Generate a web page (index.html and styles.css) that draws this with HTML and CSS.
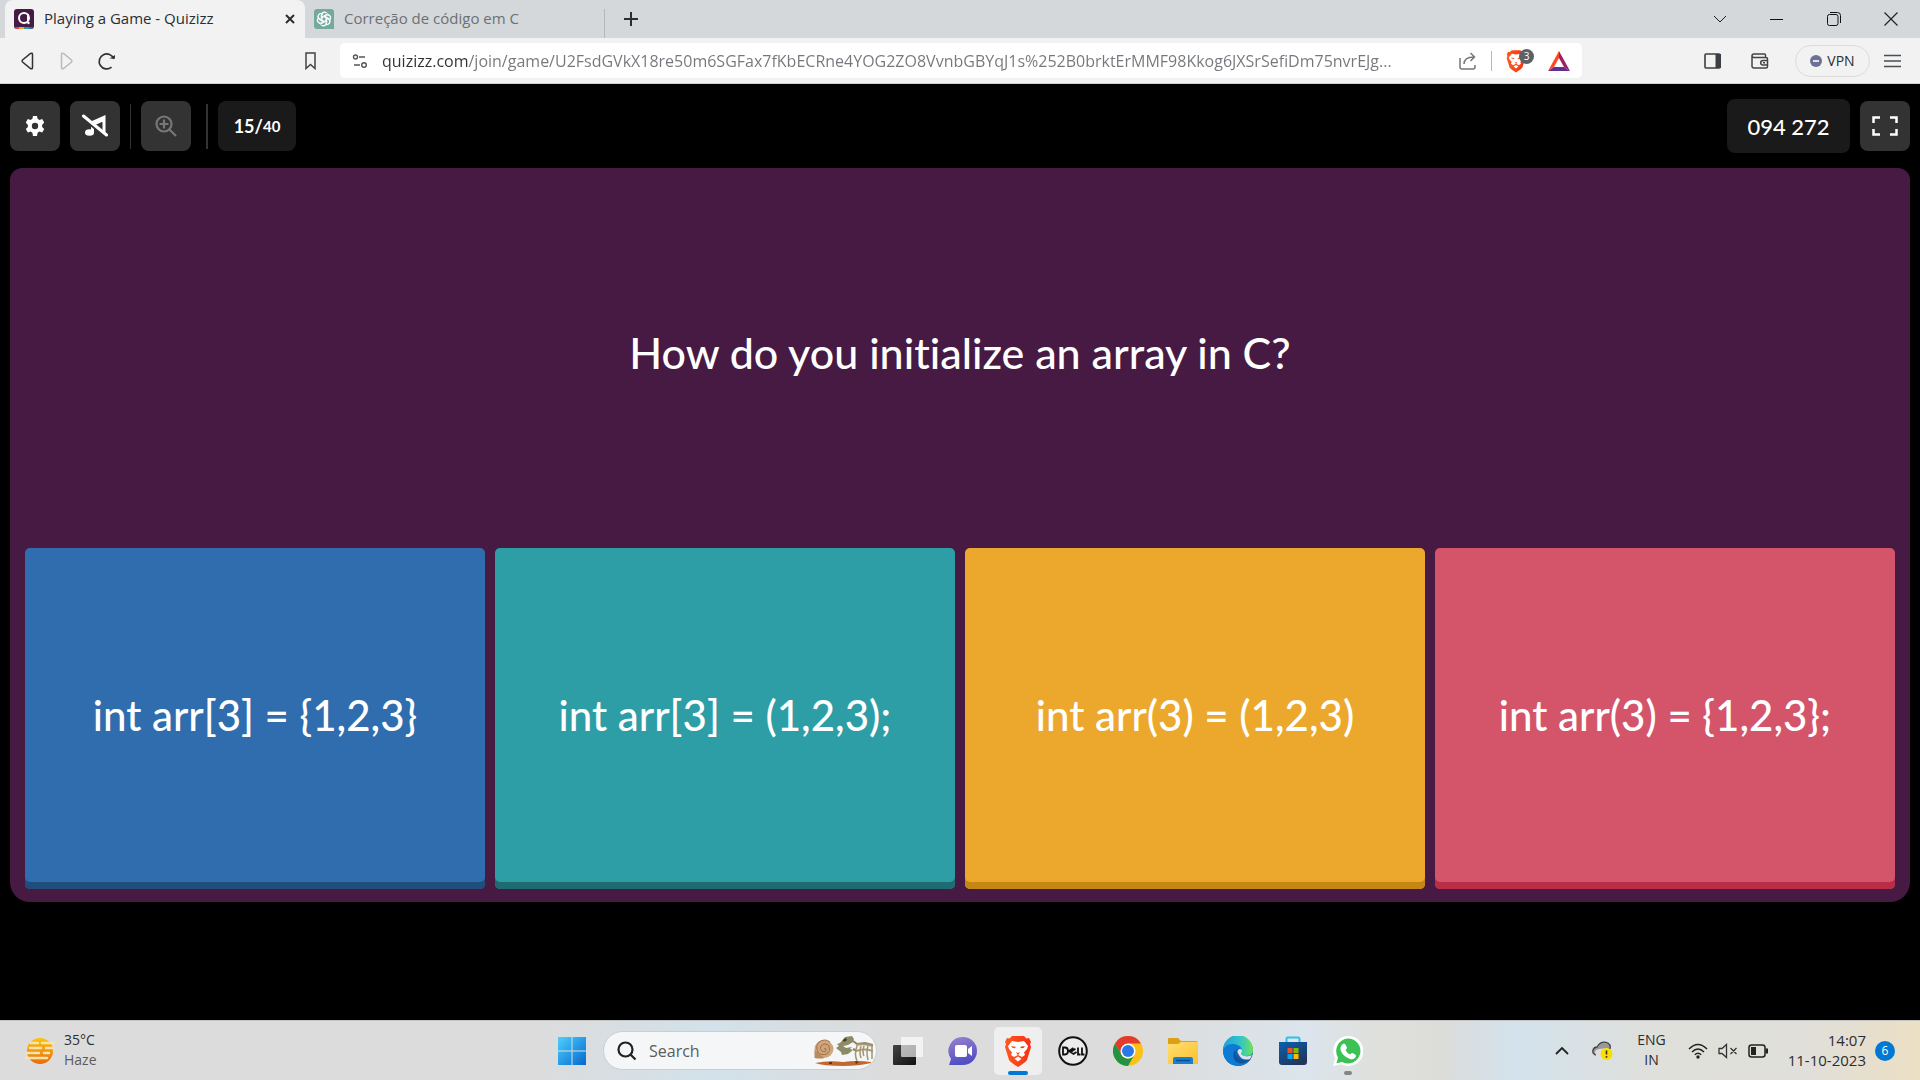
FILE: index.html
```html
<!DOCTYPE html>
<html lang="en">
<head>
<meta charset="utf-8">
<meta name="viewport" content="width=device-width, initial-scale=1">
<title>Playing a Game - Quizizz</title>
<link rel="stylesheet" href="styles.css">
</head>
<body>
<header class="browser">
  <div class="tabs">
    <div class="tab tab-active">
      <svg class="favicon" width="20" height="20" viewBox="0 0 20 20"><rect width="20" height="20" rx="3" fill="#461a42"/><path d="M1 18h4v2H3q-2 0-2-2z" fill="#e0455b"/><path d="M5 18h5v2H5z" fill="#eca82c"/><path d="M10 18h5v2h-5z" fill="#2d9da6"/><path d="M15 18h4q0 2-2 2h-2z" fill="#2f6dae"/><circle cx="10" cy="9" r="5" fill="none" stroke="#fff" stroke-width="2"/><path d="M14 5v7" stroke="#fff" stroke-width="2"/><circle cx="14.500" cy="14" r="1.200" fill="#fff"/></svg>
      <span class="tab-title">Playing a Game - Quizizz</span>
      <button class="icon-btn tab-close" aria-label="Close tab"><svg width="12" height="12" viewBox="0 0 12 12"><path d="M2 2l8 8M10 2l-8 8" stroke="#2b2d30" stroke-width="2"/></svg></button>
    </div>
    <div class="tab tab-idle">
      <svg class="favicon" width="20" height="20" viewBox="0 0 20 20"><path d="M3 0h14a3 3 0 013 3v17H3a3 3 0 01-3-3V3a3 3 0 013-3z" fill="#74aa9c"/><g fill="none" stroke="#fff" stroke-width="1"><path id="petal" d="M8 11.200V6.200a3 3 0 015.500-1.600M8 8l4-2.400a3 3 0 014.400 3"/><use href="#petal" transform="rotate(60 10 10)"/><use href="#petal" transform="rotate(120 10 10)"/><use href="#petal" transform="rotate(180 10 10)"/><use href="#petal" transform="rotate(240 10 10)"/><use href="#petal" transform="rotate(300 10 10)"/></g></svg>
      <span class="tab-title">Correção de código em C</span>
    </div>
    <button class="icon-btn new-tab" aria-label="New tab"><svg width="14" height="14" viewBox="0 0 14 14"><path d="M7 0v14M0 7h14" stroke="#2b2d30" stroke-width="2"/></svg></button>
    <div class="window-controls">
      <button class="icon-btn" aria-label="Search tabs"><svg width="14" height="14" viewBox="0 0 14 14"><path d="M1 4l6 6 6-6" fill="none" stroke="#222"/></svg></button>
      <button class="icon-btn" aria-label="Minimize"><svg width="14" height="14" viewBox="0 0 14 14"><path d="M0 7.500h13" stroke="#111"/></svg></button>
      <button class="icon-btn" aria-label="Restore"><svg width="14" height="14" viewBox="0 0 14 14"><rect x=".5" y="2.500" width="10.500" height="11" rx="2" fill="none" stroke="#111"/><path d="M3 .500h7.500a3 3 0 013 3V11" fill="none" stroke="#111"/></svg></button>
      <button class="icon-btn" aria-label="Close window"><svg width="14" height="14" viewBox="0 0 14 14"><path d="M.500 .500l13 13M13.500 .500l-13 13" stroke="#222" stroke-width="1.200"/></svg></button>
    </div>
  </div>
  <nav class="toolbar">
    <div class="history">
      <button class="icon-btn" aria-label="Back"><svg width="20" height="20" viewBox="0 0 20 20"><path d="M13.500 2.500q2-1 2 1v13q0 2-2 1L5.500 11q-1-1 0-2z" fill="none" stroke="#333" stroke-width="1.500"/></svg></button>
      <button class="icon-btn" aria-label="Forward" disabled><svg width="20" height="20" viewBox="0 0 20 20"><path d="M6.500 2.500q-2-1-2 1v13q0 2 2 1L14.500 11q1-1 0-2z" fill="none" stroke="#bbb" stroke-width="1.500"/></svg></button>
      <button class="icon-btn" aria-label="Reload"><svg width="20" height="20" viewBox="0 0 20 20"><path d="M14.500 16.200A7.500 7.500 0 1116.800 8" fill="none" stroke="#333" stroke-width="1.700"/><path d="M12.500 7.500h5.500V4z" fill="#333"/></svg></button>
    </div>
    <button class="icon-btn bookmark" aria-label="Bookmark"><svg width="14" height="18" viewBox="0 0 14 18"><path d="M2 1h9v15.500l-4.500-4-4.500 4z" fill="none" stroke="#444" stroke-width="1.500"/></svg></button>
    <div class="address">
      <button class="icon-btn" aria-label="Site settings"><svg width="16" height="16" viewBox="0 0 16 16" fill="none" stroke="#555" stroke-width="1.400"><circle cx="3.500" cy="4" r="2"/><path d="M7 4h6M2 12h6"/><circle cx="12" cy="12" r="2.300"/></svg></button>
      <input class="url" type="text" aria-label="Address" value="quizizz.com/join/game/U2FsdGVkX18re50m6SGFax7fKbECRne4YOG2ZO8VvnbGBYqJ1s%252B0brktErMMF98Kkog6JXSrSefiDm75nvrEJg...">
      <button class="icon-btn" aria-label="Share"><svg width="18" height="18" viewBox="0 0 18 18" fill="none" stroke="#777" stroke-width="1.500"><path d="M1 6v9q0 2 2 2h11q2 0 2-2v-2M5 12q0-7 10-7M11.500 1l4 4-4 4"/></svg></button>
      <span class="address-divider"></span>
      <button class="icon-btn shields" aria-label="Brave Shields, 3 blocked"><svg width="20" height="24" viewBox="0 0 28 32"><use href="#lion"/></svg><span class="badge">3</span></button>
      <button class="icon-btn" aria-label="Rewards"><svg width="22" height="20" viewBox="0 0 22 20"><path d="M11 0L0 20l6-4 5-9z" fill="#ff4724"/><path d="M11 0l11 20-6-4-5-9z" fill="#9e1f63"/><path d="M0 20h22l-6-4H6z" fill="#662d91"/></svg></button>
    </div>
    <div class="tools">
      <button class="icon-btn sidebar-btn" aria-label="Sidebar"><svg width="17" height="16" viewBox="0 0 17 16"><rect x="1" y="1" width="15" height="14" rx="1" fill="none" stroke="#3b3e43" stroke-width="1.600"/><path d="M11.500 1H17v14h-5.500z" fill="#3b3e43"/></svg></button>
      <button class="icon-btn" aria-label="Wallet"><svg width="18" height="16" viewBox="0 0 18 16" fill="none" stroke="#444" stroke-width="1.500"><path d="M1 3v10q0 2 2 2h12q1.500 0 1.500-1.500V6q0-1.500-1.500-1.500H3Q1 4.500 1 3q0-2 2-2h10.500q1 0 1 1v2.500M16.500 7.500H12a2.300 2.300 0 000 4.600h4.500M12 9.800h2"/></svg></button>
      <button class="vpn"><svg width="12" height="12" viewBox="0 0 12 12"><circle cx="6" cy="6" r="6" fill="#6b7094"/><path d="M3 6h6" stroke="#fff" stroke-width="1.600"/></svg>VPN</button>
      <button class="icon-btn" aria-label="Menu"><svg width="17" height="14" viewBox="0 0 17 14"><path d="M0 1.500h17M0 7h17M0 12.500h17" stroke="#4a4d52" stroke-width="1.500"/></svg></button>
    </div>
  </nav>
</header>

<main class="game">
  <div class="game-bar">
    <button class="game-btn" aria-label="Settings"><svg width="20" height="20" viewBox="0 0 20 20"><path d="M8 0h4l.6 2.800 1.900 1.100 2.700-.9 2 3.500L17.100 8.900v2.200l2.100 1.900-2 3.500-2.700-.9-1.900 1.100L12 20H8l-.6-3.300-1.900-1.100-2.700.9-2-3.500 2.100-1.900V8.900L.8 6.500l2-3.500 2.700.9 1.900-1.100z" fill="#fff"/><circle cx="10" cy="10" r="3.200" fill="#333"/></svg></button>
    <button class="game-btn" aria-label="Music off"><svg width="26" height="24" viewBox="0 0 26 24"><path d="M10 7l13.500-6v20h-3V8L11 12z" fill="#fff"/><path d="M9 10h3v8h-3z" fill="#fff"/><ellipse cx="7.500" cy="18.500" rx="4.500" ry="3.300" fill="#fff"/><path d="M14 11l6-3v8z" fill="#333"/><path d="M1 4l23 19" stroke="#333" stroke-width="3"/><path d="M1.500 2l23 19" stroke="#fff" stroke-width="3" stroke-linecap="round"/></svg></button>
    <span class="game-divider"></span>
    <button class="game-btn" aria-label="Zoom in" disabled><svg width="22" height="22" viewBox="0 0 22 22" fill="none" stroke="#777" stroke-width="2.200"><circle cx="9" cy="9" r="7.500"/><path d="M14.500 14.500L21 21M9 4.500v9M4.500 9h9"/></svg></button>
    <span class="game-divider game-divider-wide"></span>
    <div class="counter">15/<span class="counter-total">40</span></div>
    <div class="room-code">094 272</div>
    <button class="game-btn" aria-label="Full screen"><svg width="26" height="20" viewBox="0 0 26 20"><path d="M8 1.500H1.500V7M18 1.500h6.500V7M8 18.500H1.500V13M18 18.500h6.500V13" fill="none" stroke="#fff" stroke-width="2.500"/></svg></button>
  </div>
  <section class="stage">
    <h1 class="question">How do you initialize an array in C?</h1>
    <div class="answers">
      <button class="answer answer-blue">int arr[3] = {1,2,3}</button>
      <button class="answer answer-teal">int arr[3] = (1,2,3);</button>
      <button class="answer answer-yellow">int arr(3) = (1,2,3)</button>
      <button class="answer answer-red">int arr(3) = {1,2,3};</button>
    </div>
  </section>
</main>

<footer class="taskbar">
  <button class="weather">
    <svg width="30" height="28" viewBox="0 0 30 28"><defs><linearGradient id="sun" x2="0" y2="1"><stop stop-color="#f9c40c"/><stop offset="1" stop-color="#ee6a0c"/></linearGradient></defs><circle cx="15" cy="14" r="13" fill="url(#sun)"/><g stroke="#f5e3b0" stroke-width="2.600" stroke-linecap="round"><path d="M6 6h7M17 6h12M5 11h11M21 11h7M1 16h13M19 16h5M1 21h21"/></g></svg>
    <span class="weather-text"><span>35°C</span><span class="muted">Haze</span></span>
  </button>
  <div class="dock">
    <button class="app" aria-label="Start"><svg width="30" height="30" viewBox="0 0 30 30"><defs><linearGradient id="win" x2="1" y2="1"><stop stop-color="#4cd0fd"/><stop offset="1" stop-color="#0468cf"/></linearGradient></defs><path d="M1 1h13.500v13.500H1zM15.500 1H29v13.500H15.500zM1 15.500h13.500V29H1zM15.500 15.500H29V29H15.500z" fill="url(#win)"/></svg></button>
    <div class="search">
      <svg width="20" height="20" viewBox="0 0 20 20" fill="none" stroke="#222" stroke-width="2.200"><circle cx="8.500" cy="8.500" r="7"/><path d="M13.500 13.500L18.500 18.500"/></svg>
      <input class="search-input" type="search" placeholder="Search" aria-label="Search">
      <svg width="60" height="30" viewBox="0 0 60 30"><path d="M2 27q14-3 28-1 14-2 28 0v1q-12 3-28 3-20 0-28-3z" fill="#c4672f"/><path d="M16 26h3v2h-3zM42 25l4 1-3 2z" fill="#63301a"/><ellipse cx="11" cy="13" rx="9.500" ry="9" fill="#cfa67c"/><path d="M1.500 14v8q6 1 10 0z" fill="#b98a60"/><path d="M11 13q2-2 2 1t-4 1q-3-2-1-5 4-4 8 0 2 5-2 8-6 2-9-2-3-6 1-10 6-4 11 0" fill="none" stroke="#a0714b"/><path d="M23 12l3-2-2-2 3-1 5-6 7-1 2 3-1 3-5 3-5 1 3 2 6-1-2 2 3 1-5 4-6 1-1-3z" fill="#8d8a66"/><path d="M30 4l3-2 1 2-3 2z" fill="#3e3a26"/><path d="M40 5l4 3 8-1 8 2M40 13l4 2" fill="none" stroke="#91835d" stroke-width="2"/><path d="M43 9q8-2 17 1M43 15q8-3 17 0" fill="none" stroke="#a79b76" stroke-width="2"/><path d="M44 10q-3 8 0 15M48 10q-2 6 0 12M51 10q-2 6 0 10M55 10q-2 6 0 14M59 9v14" fill="none" stroke="#a3946d" stroke-width="1.500"/></svg>
    </div>
    <button class="app" aria-label="Task view"><svg width="30" height="28" viewBox="0 0 30 28"><defs><linearGradient id="dark" x2="1" y2="1"><stop stop-color="#444"/><stop offset="1" stop-color="#111"/></linearGradient></defs><rect y="8" width="23" height="20" rx="1" fill="url(#dark)"/><rect x="8" width="22" height="20" rx="1" fill="#fff" fill-opacity=".65"/></svg></button>
    <button class="app" aria-label="Chat"><svg width="30" height="30" viewBox="0 0 30 30"><defs><linearGradient id="chat" x2=".3" y2="1"><stop stop-color="#9a83d0"/><stop offset="1" stop-color="#514fc4"/></linearGradient></defs><path d="M15 1a14 14 0 110 28H1l2-6A14 14 0 0115 1z" fill="url(#chat)"/><rect x="7" y="9" width="12" height="12" rx="2" fill="#fff"/><path d="M20 13l4-3v10l-4-3z" fill="#fff"/></svg></button>
    <button class="app app-active" aria-label="Brave"><svg width="28" height="32" viewBox="0 0 28 32"><defs><linearGradient id="brave"><stop stop-color="#fa5b20"/><stop offset="1" stop-color="#fb2f10"/></linearGradient></defs><g id="lion"><path d="M8 1h12l2.500 2.500L25 3l2 4-1 2 1 3-4 13q-1 2-9 7-8-5-9-7L1 12l1-3-1-2 2-4 2.500.5z" fill="url(#brave)"/><path d="M8 6l6 1 6-1 4 5-1 3-3 3.500 1 2.500-3 2-4-2-4 2-3-2 1-2.500L5 14l-1-3z" fill="#fff"/><path d="M14 21.500l3.500 2.200L14 26.500l-3.500-2.800z" fill="#fff"/><path d="M7 11l4.500.8v1.500L8.500 13zM21 11l-4.500.8v1.500l3-.3zM12 17l2 1 2-1-2 3.500z" fill="url(#brave)"/></g></svg></button>
    <button class="app" aria-label="Dell"><svg width="30" height="30" viewBox="0 0 30 30"><circle cx="15" cy="15" r="13.800" fill="#ececec" stroke="#111" stroke-width="2"/><path d="M5 11.500v7h2q3 0 3-3.500t-3-3.500zM15.500 12l-4.500 3 4.500 3 3-2M13 15.800l4.500-3M20 11.500v7h2.500M24 11.500v7h2.500" fill="none" stroke="#111" stroke-width="1.800"/></svg></button>
    <button class="app" aria-label="Chrome"><svg width="30" height="30" viewBox="0 0 30 30"><circle cx="15" cy="15" r="15" fill="#fbc116"/><path d="M2 7.500A15 15 0 0128 7.500H15L8.500 18.800z" fill="#e33b2e"/><path d="M2 7.500A15 15 0 0015 30l6.500-11.200A7.500 7.500 0 018.500 18.800z" fill="#229342"/><circle cx="15" cy="15" r="7.500" fill="#fff"/><circle cx="15" cy="15" r="6" fill="#2a78e8"/></svg></button>
    <button class="app" aria-label="File Explorer"><svg width="30" height="26" viewBox="0 0 30 26"><path d="M1 0h9l3 3h15q2 0 2 2v4H0V1q0-1 1-1z" fill="#dda011"/><defs><linearGradient id="fold" x2="1" y2="1"><stop stop-color="#ffdf73"/><stop offset="1" stop-color="#fbc12c"/></linearGradient></defs><path d="M0 6h10l3-2h17v22H0z" fill="url(#fold)"/><path d="M5 26v-5q0-2 2-2h16q2 0 2 2v5z" fill="#1680d4"/><path d="M8 22.500h14" stroke="#0a4c8d" stroke-width="1.500"/></svg></button>
    <button class="app" aria-label="Edge"><svg width="30" height="30" viewBox="0 0 30 30"><defs><linearGradient id="edge"><stop stop-color="#1c9fe0"/><stop offset=".6" stop-color="#35c6c5"/><stop offset="1" stop-color="#6ee354"/></linearGradient></defs><circle cx="15" cy="15" r="15" fill="#0f63ba"/><path d="M0 14A15 15 0 0130 14q0 6-7 6-5 0-5-2 2-3 0-5-3-3-8-1-7 3-7 9-3-3-3-7z" fill="url(#edge)"/><path d="M0 14q3-7 11-6 6 1 8 5-5-2-7 2-1 6 4 9 6 3 11 0-5 6-12 6Q1 29 0 14z" fill="#0d7bd3"/><path d="M12 14q-4 6 1 12 8 4 15-3-4 2-9 1-7-2-7-10z" fill="#10559c"/><path d="M16 19q-3-4 0-6 5 0 2 5 2 3 8 2l3-1-2 4q-8 2-11-4z" fill="#dce4ea"/></svg></button>
    <button class="app" aria-label="Microsoft Store"><svg width="30" height="30" viewBox="0 0 30 30"><defs><linearGradient id="store" x2=".6" y2="1"><stop stop-color="#0a61b0"/><stop offset="1" stop-color="#22355c"/></linearGradient></defs><path d="M8.500 7V3q0-1.500 1.500-1.500h10q1.500 0 1.500 1.500v4" fill="none" stroke="#2cc0ee" stroke-width="2"/><path d="M1 6h28v20q0 3-3 3H4q-3 0-3-3z" fill="url(#store)"/><path d="M9.500 12h5v5h-5z" fill="#f25022"/><path d="M15.500 12h5v5h-5z" fill="#7fba00"/><path d="M9.500 18h5v5h-5z" fill="#00a4ef"/><path d="M15.500 18h5v5h-5z" fill="#ffb900"/></svg></button>
    <button class="app app-running" aria-label="WhatsApp"><svg width="30" height="30" viewBox="0 0 30 30"><path d="M15 0a15 15 0 11-6.500 28.300L0 30l2.200-7.500A15 15 0 0115 0z" fill="#fff"/><path d="M15 2.500a12.500 12.500 0 11-6 23.500l-5.500 1.300L5 21.500A12.500 12.500 0 0115 2.500z" fill="#3cc254"/><path d="M10 8q1-1 2 0l2 3.500q0 1-1.500 2.500 1.500 3 4.500 4.500 1.500-2 2.500-1.500l3 1.800q1 1 0 2.500-2 3-6 1.500-7-2.500-9-9Q7 10 10 8z" fill="#fff"/></svg></button>
  </div>
  <div class="tray">
    <button class="icon-btn" aria-label="Hidden icons"><svg width="14" height="9" viewBox="0 0 14 9"><path d="M1 8l6-6 6 6" fill="none" stroke="#222" stroke-width="1.800"/></svg></button>
    <button class="icon-btn cloud" aria-label="OneDrive"><svg width="21" height="20" viewBox="0 0 21 20"><path d="M4 14q-4-1-3-5 1-3 4-3 4-7 11-4 3 2 2 6" fill="#999" stroke="#444" stroke-width="1.300"/><path d="M4 14q-3-5 3-6l9-1 1 7z" fill="#ddd"/><circle cx="14.500" cy="13" r="6" fill="#fadf00"/><path d="M14.500 9.500v4M14.500 15v1.700" stroke="#333" stroke-width="1.600"/></svg></button>
    <button class="lang"><span>ENG</span><span>IN</span></button>
    <button class="status" aria-label="Network, volume and battery">
      <svg width="20" height="16" viewBox="0 0 20 16"><path d="M1 6q9-9 18 0M4 9q6-6 12 0M6.800 11.800q3.200-3 6.400 0" fill="none" stroke="#222" stroke-width="1.500"/><circle cx="10" cy="14" r="1.700" fill="#222"/></svg>
      <svg width="20" height="16" viewBox="0 0 20 16" fill="none" stroke="#333" stroke-width="1.300"><path d="M1 5.500h3L8.500 1.500v13L4 10.500H1zM12.500 5l6 6M18.500 5l-6 6"/></svg>
      <svg width="20" height="14" viewBox="0 0 20 14"><rect x="1" y="1" width="16" height="12" rx="2.500" fill="none" stroke="#222" stroke-width="1.500"/><path d="M3 3h5v8H3zM17.500 4.500H20v5h-2.500z" fill="#222"/></svg>
    </button>
    <button class="clock"><span>14:07</span><span>11-10-2023</span></button>
    <span class="notice">6</span>
  </div>
</footer>
</body>
</html>
```
FILE: styles.css
```css
* { box-sizing: border-box; }
body {
  margin: 0;
  min-height: 100vh;
  display: flex;
  flex-direction: column;
  background: #000;
  font-family: "Open Sans", "Noto Sans", sans-serif;
  font-size: 14px;
  color: #2b2d30;
}
svg { display: block; flex: none; }
button, input { font: inherit; color: inherit; margin: 0; }
button { border: 0; padding: 0; background: none; cursor: pointer; }
.icon-btn { display: flex; align-items: center; justify-content: center; flex: none; }

/* Browser chrome */
.tabs { display: flex; height: 38px; padding: 0 1px 0 5px; background: #d4d8db; }
.tab { display: flex; align-items: center; width: 300px; gap: 10px; padding: 0 9px; }
.tab-active { background: #f2f2f2; border-radius: 8px 8px 0 0; }
.tab-title { flex: 1; padding-bottom: 2px; font-size: 15px; white-space: nowrap; }
.tab-idle { padding-right: 0; color: #6d7073; }
.tab-idle::after { content: ""; width: 1px; height: 29px; align-self: flex-end; background: #b4b8bb; }
.new-tab { width: 52px; }
.window-controls { display: flex; margin-left: auto; }
.window-controls .icon-btn { width: 57px; }
.toolbar {
  display: flex;
  align-items: center;
  height: 46px;
  padding: 0 19px 0 17px;
  background: #f2f2f2;
  border-bottom: 1px solid #d0d0d0;
}
.history { display: flex; gap: 20px; }
.bookmark { margin: 0 22px 0 auto; width: 14px; }
.address {
  display: flex;
  align-items: center;
  flex: 0 1 1242px;
  min-width: 0;
  height: 35px;
  padding: 0 12px;
  gap: 14px;
  background: #fff;
  border-radius: 5px;
}
.url {
  flex: 1;
  min-width: 0;
  height: 32px;
  padding: 0;
  border: 0;
  outline: 0;
  font-size: 16px;
  color: transparent;
  background: linear-gradient(90deg, #333 87px, #74777b 87px);
  -webkit-background-clip: text;
  background-clip: text;
}
.address-divider { width: 1px; height: 20px; background: #b8b8b8; }
.shields { position: relative; width: 28px; justify-content: flex-start; }
.badge {
  position: absolute;
  top: 0;
  right: 0;
  width: 15px;
  height: 15px;
  border-radius: 50%;
  background: #5e6068;
  color: #fff;
  font-size: 10px;
  line-height: 15px;
}
.tools { display: flex; align-items: center; gap: 26px; margin-left: 122px; }
.sidebar-btn { margin-right: 4px; }
.vpn {
  display: flex;
  align-items: center;
  justify-content: center;
  gap: 5px;
  width: 75px;
  height: 32px;
  border: 1px solid #dcdcdc;
  border-radius: 16px;
}
.vpn + .icon-btn { margin-left: -12px; }

/* Game */
.game {
  flex: 1;
  display: flex;
  flex-direction: column;
  padding: 0 10px 118px;
  font-family: Lato, sans-serif;
  font-variant-ligatures: none;
  color: #fff;
}
.game-bar { display: flex; align-items: center; gap: 10px; height: 84px; }
.game-btn {
  display: flex;
  align-items: center;
  justify-content: center;
  width: 50px;
  height: 50px;
  border-radius: 8px;
  background: #333;
}
.game-divider { width: 1px; height: 45px; background: #333; }
.game-divider-wide { width: 2px; margin-left: 5px; }
.counter, .room-code {
  display: flex;
  align-items: center;
  justify-content: center;
  border-radius: 8px;
  background: #1a1a1a;
  font-weight: 500;
}
.counter { width: 78px; height: 50px; font-size: 18px; font-weight: 700; }
.counter-total { font-size: 15px; }
.room-code { width: 123px; height: 54px; margin-left: auto; font-size: 22px; }
.stage {
  flex: 1;
  display: flex;
  flex-direction: column;
  padding: 15px 15px 13px;
  border-radius: 12px 12px 20px 20px;
  background: #461a42;
}
.question {
  flex: 1;
  display: flex;
  align-items: center;
  justify-content: center;
  margin: 0;
  padding-bottom: 26px;
  font-size: 43px;
  font-weight: 500;
  text-align: center;
}
.answers { display: grid; grid-template-columns: repeat(4, 1fr); gap: 10px; }
.answer {
  min-height: 341px;
  padding: 0 8px 7px;
  border-radius: 5px;
  font-size: 42px;
  font-weight: 500;
  font-variant-ligatures: none;
}
.answer-blue { background: #2f6dae; box-shadow: inset 0 -7px #204e7c; }
.answer-teal { background: #2d9da6; box-shadow: inset 0 -7px #1f6b72; }
.answer-yellow { background: #eca82c; box-shadow: inset 0 -7px #c58612; }
.answer-red { background: #d4546a; box-shadow: inset 0 -7px #b92e46; }

/* Taskbar */
.taskbar {
  display: grid;
  grid-template-columns: 1fr auto 1fr;
  align-items: center;
  height: 60px;
  border-top: 1px solid #c4c4c4;
  background: linear-gradient(90deg, #dcdcdc 28%, #d2e1ea 37%, #dcdcdc 46%, #dcdcdc 60%, #dbe5ec 68%, #dfdfdb 72%, #dcdcd9 75%, #d2e2ec 79%, #dfdfdb 86%, #e0dfda 94%, #ecdfc4 100%);
}
.weather { display: flex; align-items: center; gap: 9px; padding-left: 25px; text-align: left; }
.weather-text, .lang, .clock { display: flex; flex-direction: column; padding-bottom: 2px; line-height: 20px; }
.muted { color: #5c5c5c; }
.dock { display: flex; align-items: center; gap: 7px; }
.app {
  position: relative;
  display: flex;
  align-items: center;
  justify-content: center;
  width: 48px;
  height: 48px;
  border-radius: 5px;
}
.app-active { background: #efefef; }
.app-active::after, .app-running::after {
  content: "";
  position: absolute;
  bottom: 0;
  width: 20px;
  height: 4px;
  border-radius: 2px;
  background: #0078d4;
}
.app-running::after { width: 8px; background: #858585; }
.search {
  display: flex;
  align-items: center;
  width: 274px;
  height: 39px;
  padding: 0 3px 0 13px;
  gap: 12px;
  border: 1px solid #c9ced1;
  border-radius: 20px;
  background: #f4f6f8;
  font-size: 16px;
}
.search-input { flex: 1; min-width: 0; border: 0; padding: 0; background: none; outline: 0; }
.search-input::placeholder { color: #5c5c5c; opacity: 1; }
.tray { display: flex; align-items: center; justify-content: flex-end; padding-right: 25px; }
.cloud { margin: 0 24px 0 23px; }
.lang { align-items: center; margin-right: 22px; }
.status { display: flex; align-items: center; gap: 10px; margin-right: 20px; }
.clock { align-items: flex-end; margin-right: 9px; font-size: 15px; }
.notice {
  width: 20px;
  height: 20px;
  border-radius: 50%;
  background: #0078d4;
  color: #fff;
  font-size: 12px;
  line-height: 20px;
  text-align: center;
}
```
